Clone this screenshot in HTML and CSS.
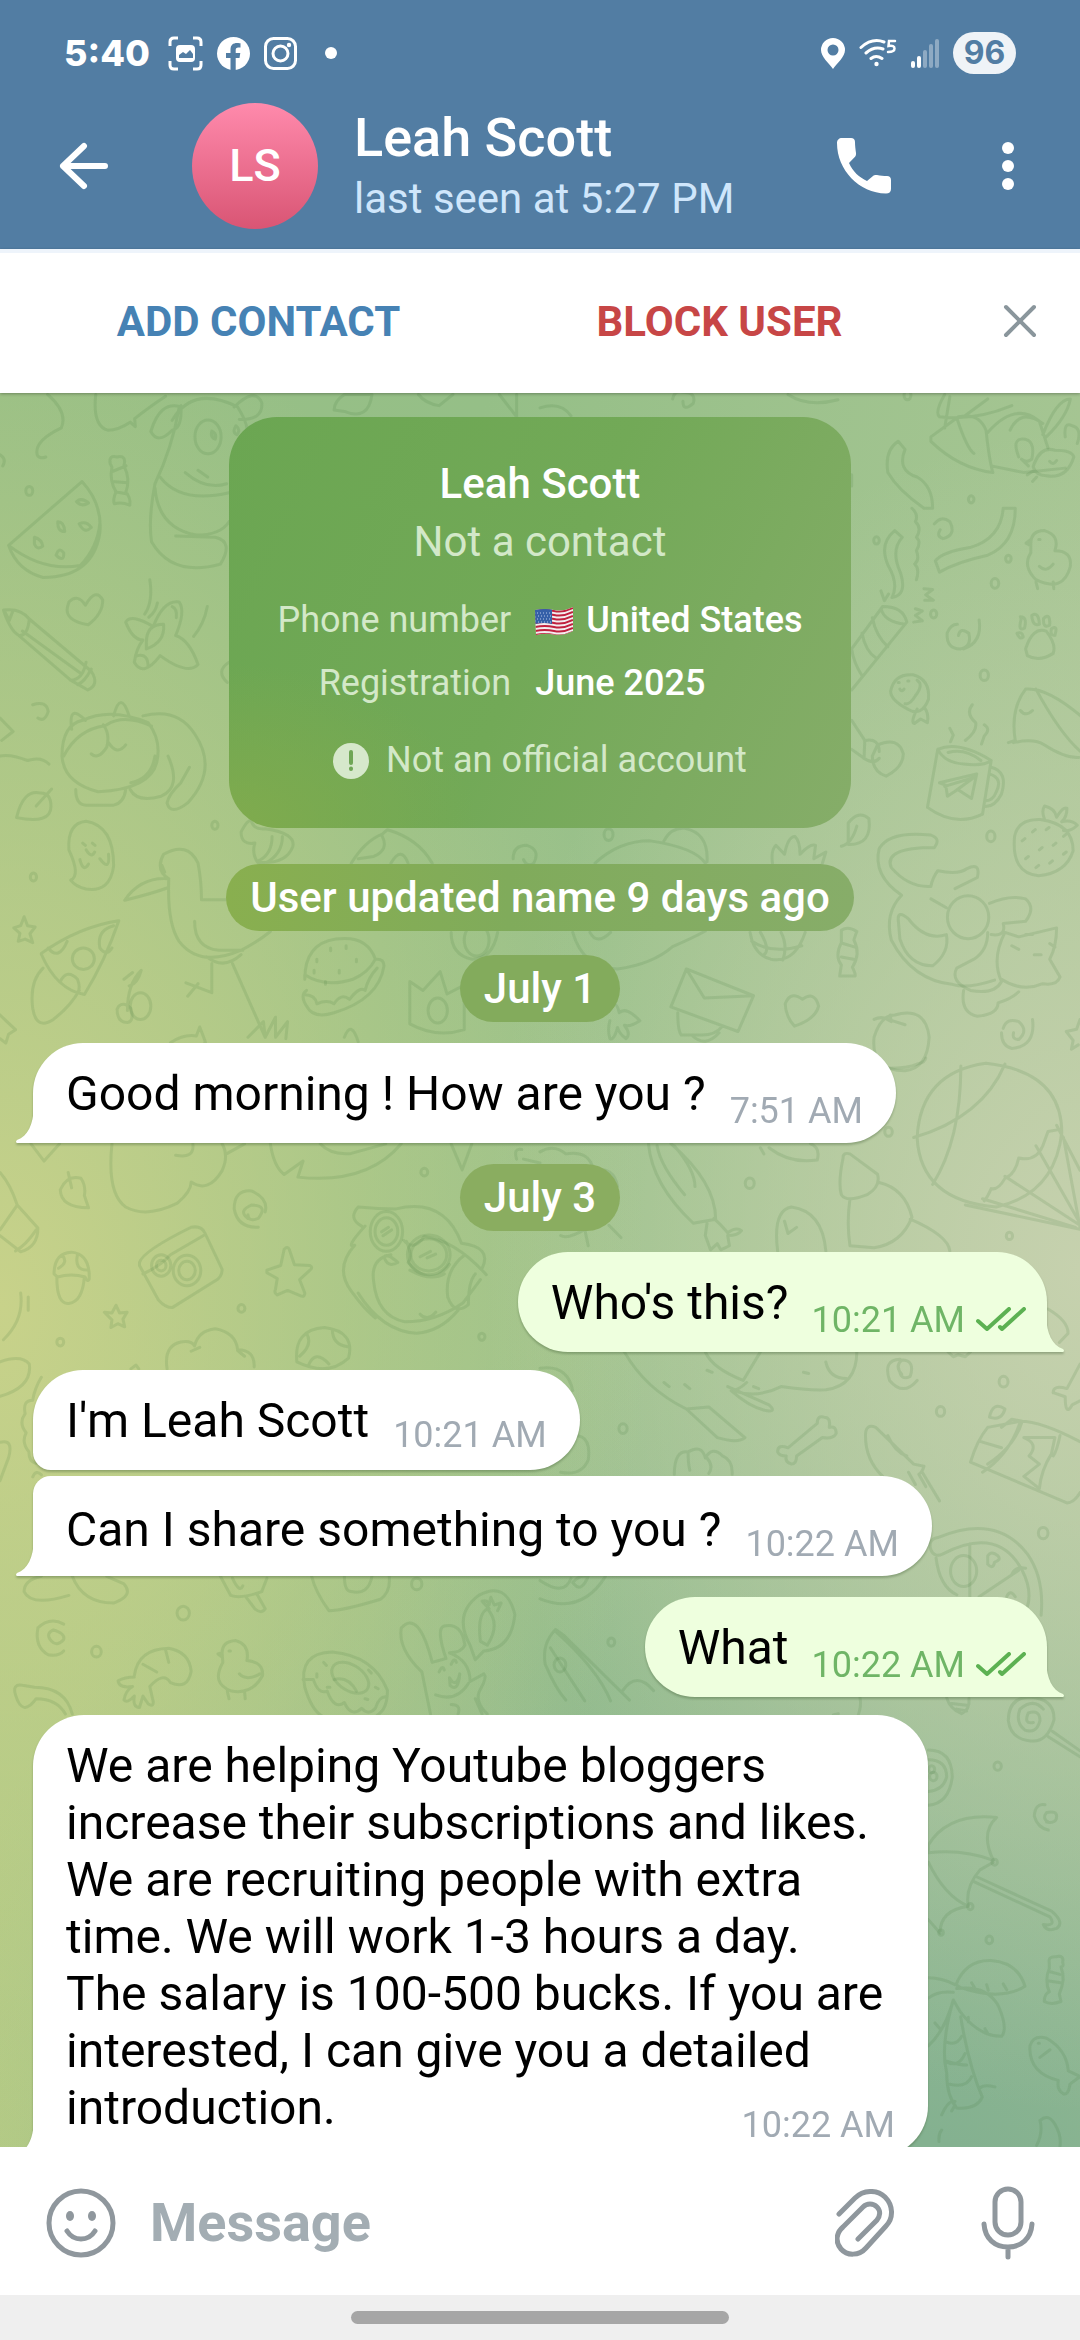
FILE: index.html
```html
<!DOCTYPE html>
<html lang="en">
<head>
<meta charset="utf-8">
<meta name="viewport" content="width=device-width, initial-scale=1">
<title>Leah Scott</title>
<link rel="stylesheet" href="styles.css">
</head>
<body>
<header class="header">
  <div class="status-bar">
    <div class="status-group">
      <span class="clock">5:40</span>
      <svg width="35" height="35" viewBox="0 0 35 35" fill="none" stroke="#fff" stroke-width="3" aria-hidden="true"><path d="M2 10V6q0-4 4-4h4M25 2h4q4 0 4 4v4M33 25v4q0 4-4 4h-4M10 33H6q-4 0-4-4v-4"/><rect x="8" y="9" width="19" height="17" rx="4" fill="#fff" stroke="none"/><path d="M11 22v-3l4-3 3 2 4-4 3 4v4z" fill="#527da3" stroke="none"/></svg>
      <svg width="33" height="33" viewBox="0 0 33 33" aria-hidden="true"><circle cx="16.500" cy="16.500" r="16.500" fill="#fff"/><path d="M13.500 33V21H9v-5h4.500v-3.500c0-4.500 2.700-6.500 6.500-6.500 1.800 0 3.500.3 3.500.3v4.200h-2.200c-2 0-2.600 1.200-2.600 2.500v3h4.600l-.8 5h-3.800v12z" fill="#527da3"/></svg>
      <svg width="33" height="33" viewBox="0 0 33 33" fill="none" stroke="#fff" stroke-width="3" aria-hidden="true"><rect x="1.500" y="1.500" width="30" height="30" rx="8"/><circle cx="16.500" cy="16.500" r="7.500"/><circle cx="25" cy="8" r="2.200" fill="#fff" stroke="none"/></svg>
      <i class="more-dot"></i>
    </div>
    <div class="status-group status-group--right">
      <svg width="24" height="31" viewBox="0 0 24 31" aria-hidden="true"><path fill="#fff" fill-rule="evenodd" d="M12 0a12 12 0 0 1 12 12c0 7-8 13-12 19C8 25 0 19 0 12A12 12 0 0 1 12 0zm0 6.500a5.500 5.500 0 1 0 0 11 5.500 5.500 0 0 0 0-11z"/></svg>
      <svg width="38" height="30" viewBox="0 0 38 30" fill="none" stroke="#fff" stroke-width="3" stroke-linecap="round" aria-hidden="true"><path d="M2 9.500Q13-.5 25 4M7 15q8-7 17-4M12 20.500q5-4 11 0"/><circle cx="17.500" cy="26" r="2.200" fill="#fff" stroke="none"/><path d="M36 3h-6l-.5 5q6-1 6 2.500T29 14" stroke-width="2.500"/></svg>
      <svg width="28" height="31" viewBox="0 0 28 31" fill="#fff" aria-hidden="true"><rect y="23" width="4" height="7" rx="2"/><rect x="6" y="18" width="4" height="12" rx="2"/><g opacity=".35"><rect x="12" y="12" width="4" height="18" rx="2"/><rect x="18" y="6" width="4" height="24" rx="2"/><rect x="24" y="1" width="4" height="29" rx="2"/></g></svg>
      <span class="battery">96</span>
    </div>
  </div>
  <div class="app-bar">
    <button class="icon-button icon-button--back" aria-label="Back"><svg width="50" height="48" viewBox="0 0 50 48" fill="none" stroke="#fff" stroke-width="6" stroke-linecap="round" stroke-linejoin="round"><path d="M46 24H4M25 4 4 24l21 20"/></svg></button>
    <div class="avatar">LS</div>
    <div class="peer">
      <h1 class="peer-name">Leah Scott</h1>
      <p class="peer-status">last seen at 5:27 PM</p>
    </div>
    <button class="icon-button icon-button--call" aria-label="Call"><svg width="54" height="56" viewBox="0 0 54 56" fill="#fff"><path d="M5 0h9c2.500 0 4 1.500 4 4 0 4 .5 7 1 11 .2 1.500-.2 3-1.200 4L12 25c4 9 10 14 18 18l6-5c1-1 2.500-1.200 4-1 3.500.6 6.500 1 10 1 2.500 0 4 1.500 4 4v9c0 3-2 4.500-5 4.500C22 55 0 32 0 5c0-3 2-5 5-5z"/></svg></button>
    <button class="icon-button icon-button--menu" aria-label="More options"><svg width="12" height="50" viewBox="0 0 12 50" fill="#fff"><circle cx="6" cy="7" r="6"/><circle cx="6" cy="25" r="6"/><circle cx="6" cy="43" r="6"/></svg></button>
  </div>
</header>

<div class="report-bar">
  <button class="report-button">ADD CONTACT</button>
  <button class="report-button report-button--danger">BLOCK USER</button>
  <button class="report-close" aria-label="Close"><svg width="34" height="34" viewBox="0 0 34 34" fill="none" stroke="#8a969c" stroke-width="4" stroke-linecap="round"><path d="M3 3l28 28M31 3 3 31"/></svg></button>
</div>

<main class="chat">
  <svg class="wallpaper" viewBox="0 393 1080 1754" preserveAspectRatio="xMidYMin slice" aria-hidden="true">
    <g transform="translate(0 390) scale(.3444 .4464)">
      <path d="M138 10q60 40 40 75-80 30-70 60 5 10 25 5M278 10q-10 70 35 80 30 0 65-18l15 10-2-18q50-30 90-50M0 145q20 10 8 25"/>
      <path d="M320 165q-5-20 20-15 28-5 20 20 20 30 5 60 15 10 12 28-25-8-45-3-5-10 5-27-20-25-12-55zM328 182l38-12M325 205l45 3M335 228l35 5"/>
      <path d="M25 348 238 205q60 50 52 115-20 100-165 100Q50 405 25 348zm0 0q100 60 208 45 50-40 57-95M222 250q15-10 35 3-20 10-35-3zM230 300q20-8 35 8-20 15-35-8zM168 295q18 0 20 22-22 0-20-22zM100 330q22 5 24 20-15 10-24-5zM163 370q8-20 22-5 2 18-15 10z"/>
      <circle cx="85" cy="226" r="10"/><circle cx="604" cy="105" r="38"/><circle cx="624" cy="975" r="9"/><circle cx="97" cy="1091" r="9"/>
      <path d="M525 38q-60-15-87 55 20 30 62-3 30-5 25-55zM500 68q60-80 190-30 40 50 20 60M680 38q60-45 80-10 5 40-65 38M520 40q-20 90-70 170-20 80-10 130 60 80 200 50 40-50-15-60l-115-3M465 195q60 60 200 35M450 220q10 90 120 105 70 0 95-30M538 185q60 40 120 25M575 180l28 15M685 80q15 10 3 20-15-5-3-20zM615 92q15 5 10 18-15-5-10-18z"/>
      <path d="M200 475q25-20 48 7 30-40 50-12 2 30-42 56-70-10-60-40z"/>
      <path d="M10 493q50-5 75 20L265 630q25 30-10 42L205 650 55 550q-25-10-45-57zm75 20q-5 40-30 37M12 494l15 22 10-20M65 540l170 95M250 610q-10 40-45 40M265 625q-20 30-40 35"/>
      <path d="M365 520q15-20 80 10 30-60 75-55 20 20-10 75 40 10 65 65-30 25-110-20-50 50-75 15 5-30 25-50-30 0-50-40zM425 565q0-40 50-40 5 40-50 55zM400 595q30-5 30 25M435 425q10 50-15 77M457 477q-5 20-25 32M602 485q-10 40-40 67M500 485q15 5 12 25"/>
      <path d="M180 820q0-70 60-80 80-30 190 5 40 40 25 90-20 60-170 65-100-20-105-80zM208 760q-10-60 40-20M330 730q20-60 45 0M185 820q40-60 120-68M300 750q20 20 10 50-25 30-45 15M310 750q50-25 130 3M315 790q25 30 50 5M415 730q100-20 150 40 70 80-20 155-50 30-60 0 5-20 40-45l25-35M380 880q60-10 70-60M378 895q20 30 90 15 60-20 20-90M220 895q0 35 30 35h80q30-5 35-35M95 705q40-10 45 15-10 25-30 15M0 735l38 30L5 785M0 820q30-5 80 10 40-10 62 8"/>
      <path d="M48 958q20-65 70-55 30 0 30 30 0 40-100 25zM105 932l45-38"/>
      <path d="M200 1030q-5-60 50-64 80 10 80 100-10 60-80 52-30-5-45-20 30-10-5-68zM240 1015l8 5M268 1015l8 5M250 1030q15 20 25 5M232 1052q10 30 25 10M290 1050q30 30 25-10"/>
      <path d="M490 1095q-40-20-15-55 70-30 100 20 10 40 10 82h70M490 1095q-80-5-128 48 80-15 125-28M490 1095q-5 100 30 140 60 60 180 20 50-20 85-42M565 1190q0 60 70 65h70M600 1270q50 30 100-5M615 1285v65l-75-22M575 1330l-30 28M675 1285l95 165M720 1450l45-35 5 35 30-45v45l35-35-5 38M470 1065l8 15"/>
      <path d="M700 990q20-30 30-25 5 20 40 18 90 10 80 40-20 40-100 35M700 990q0 30 40 25M740 1015q-10 25 10 45M790 1000q0 40-40 55M820 1000q0 40-50 60"/>
      <path d="M40 1205l20-5 10-20 10 20 22 3-15 15 8 20-22-8-20 5 5-18z"/>
      <path d="M120 1262q110-60 225-73-40 90-100 165-80-10-125-90zM125 1295q-40 30-30 90 10 50 60 25 50-30 75-65M140 1250q30 30 55-15M330 1200q-50 10-40 50 20 20 35 0M175 1325q20-30 50-5 10 20 0 30"/><ellipse cx="242" cy="1274" rx="32" ry="24"/>
      <path d="M370 1390q0-60 40-90-10 30-35 35M345 1380q15-10 35 5 10 30-10 32-30 0-30-30zM360 1320l25-15"/><circle cx="408" cy="1380" r="30"/>
      <path d="M885 1320q0-80 90-90 90-10 115 45-20 30-65 45-80 20-140-10zM890 1345q-20 10 0 35 20 30 80 15 130-30 145-105 0-15-20-15M885 1355q30 0 35 20 30-10 50 0 20-25 45-10 30-30 45-20 10-30 35-50"/><path d="M912 1300v6M920 1275v6M960 1250v6M1005 1245v6M1035 1275v6M945 1325v6M985 1300v6" />
      <path d="M1190 1420v-95l38 20 50-42 20 50 50-20v100q-80 20-158-13z"/><circle cx="1271" cy="1390" r="28"/>
      <path d="M970 45q0-20 30-35h80q-10 60-80 38zM1215 10q20 20 60 25l40-25M1450 10l50 50M1500 10v55M1020 1060q40-50 90-65l15-10q90 20 130 75M1110 1000q20 30-25 45l-45 5M1135 1060q30-40 50 0M1490 1050q0-30 40-30 40 10 20 40-20 10-30-8M1310 1215q0 50 60 60 60 0 75-60"/><circle cx="1384" cy="1232" r="36"/>
      <path d="M495 1462q40-20 75-15l10-20 10 20q10 20 5 15M1000 1450q20-40 40 10M0 1400l20 15 25 18-20 10-8 20-17-10"/>
      <path d="M665 610q-40 20-5 45"/>
    </g>
    <g transform="translate(540 390) scale(.3444 .4464)">
      <path d="M0 40q60-15 90 18M385 20q5-20 30-15 40 0 30 25-30 20-30-5M720 10q60 30 145 12M905 190v25"/>
      <path d="M1175 10q-30 40-15 50 100 10 210-25M1190 15l-15 70M1135 105l80-45q60-10 80 30 10 70 20 95-100-10-180-70zM1210 62q30 70 50 80M1300 95q80-70 150-25l25 60M1365 90q30-50 95-15M1310 170l95 15 120-10M1460 100q40-80 80-80-10 40-70 85M1230 60l70-40"/>
      <path d="M1435 165q20-40 60-30 50 0 55 15-20 50-80 42-30 0-38-20zM1390 150q-20-40 10-40 40 0 28 45-15 10-30 0l20 15M1525 105q-5-35 20-25 30 5 15 40M1480 160q10 10 20-2M1415 190l20-10M1430 205l12-10"/>
      <path d="M1040 115q-40 20-30 70 30 40 105 80h25q0-50-45-70-60-15-35-62zM1345 265h35q0 80-80 105-90 15-140 38l-12-25q20-20 100-30 90-20 97-88zM1030 315l22 15q-35 30-5 80 20 50-25 55 20-30-10-70-30-50 18-80zM1080 265q20 15 10 30 20 15 3 35 15 10 0 30 10 20-5 30 15 10 5 35M1145 300q20-20 45-5 20 30-20 38-20-5-8-20M1115 445l25 2-20 12 22 12h-25M1090 490l20 5-20 10 20 12-25 3M990 450l10 22 12-15"/>
      <circle cx="1252" cy="245" r="8"/><circle cx="977" cy="337" r="8"/><circle cx="1360" cy="378" r="8"/><circle cx="1321" cy="433" r="11"/><circle cx="1143" cy="502" r="9"/><circle cx="1290" cy="639" r="12"/><circle cx="1309" cy="1000" r="12"/><circle cx="199" cy="996" r="13"/><circle cx="1067" cy="12" r="10"/>
      <path d="M1425 345q0-30 40-30 45 10 30 45 50 0 45 35-20 60-100 30-40-30-15-60zM1425 335l-14 8 14 6M1490 390q-20 20-40 5M1440 430l5 15M1490 430l2 15M1448 335h4"/>
      <path d="M905 580l90-95q60 0 70 35L905 672M990 490q10 30 70 35M965 510q10 40 45 65M935 545q10 40 40 55M905 580q5 30 30 60M1215 550q5-20 30-5 10 30-25 35-40 0-38-35 10-20 30-20M1275 515q10 50-45 65"/>
      <path d="M1410 580q20-50 60-40 30 30 20 50-40 20-75 5zM1395 508q20 0 12 25-20 10-10-20zM1428 505q20-10 22 20-20 5-22-20zM1462 512q20-15 18 15-20 8-18-15zM1485 535q20-10 10 15-15 0-10-15zM1385 545q15-5 18 8-10 8-18-8z"/>
      <path d="M1018 675q10-40 65-37 50 10 45 55-20 40-60 22-50-20-50-40zM1095 715q-20 30-8 32l18-10 20 8q5-20-10-35M1095 650q20 10-5 35-15 20-30 18M1040 655h3M1068 652h3M1045 670q5 8 12 0"/>
      <path d="M905 740l38 45-2 40-36-20M945 785q40-5 40 25M940 825q30 15 45 0M980 795q60-20 75 20 0 30-50 50-40-10-40-45z"/>
      <path d="M1360 790l20-5q-15-70 30-115 60-5 160 60M1375 790q60-10 90 5 60 30 100 28M1395 718q15 15 35 0M1440 670q70 100 130 140M1255 705q-20 20 10 40 5 20-30 40M1190 758l10 15-8 15M1290 750q20 10 0 25l-8 18"/>
      <path d="M1155 805q60-20 155 25l-25 120q-80 30-160-15zM1155 805q20 30 75 33 60 5 80-8M1185 812q50-10 95 18M1310 845q50 10 30 60-20 30-50 28M1305 860q40 10 20 40-10 20-30 20M1160 880l108-20-15 55-40-20-30 15-5-25zM1175 888l85-20-50 28"/>
      <path d="M1378 1000q10-40 75-38 95 10 95 70-20 50-100 56-80-5-70-88zM1465 962q-10-20 0-30 30 5 35 25 20-25 30-20 0 20-15 30 30-5 45 8-20 15-40 12M1400 1010l8-5M1430 990l8-5M1470 985l8-5M1410 1050l8-5M1450 1030l8-5M1490 1020l8-5M1520 1000l8-5M1440 1070l8-5M1480 1060l8-5M1520 1040l8-5"/>
      <path d="M895 970q30-30 60-10 10 60-60 58zM875 1022q30-5 45-45M1145 1025q20-20-10-28-120-10-150 30-20 60 65 105-50 40-30 100 60 90 180 100 40 10 120-10M1145 1025q-150 0-125 45 50 45 115 42 5-20 20-35 60 10 85-5 40-15 30 20l-65 25M1040 1185q0-20 30 0 50 50 110 35 10 40-40 70-70 0-95-60zM1135 1140l45 20"/>
      <ellipse cx="1243" cy="1181" rx="60" ry="48"/>
      <path d="M1305 1150q60-20 105-10 30 20 0 50l-65 5q10 30-35 25M1300 1215q0 40-40 60l-50 20q-20 30 40 50 70 10 90-20-30-50 10-110l40 10 110-20q0 40-20 70l30 40q-10 20-50 15-60 20-120-10M1230 1345q-10 50 40 58 60-5 60-30 40-10 60-25M1410 1220h20M1435 1265h20M1480 1240l15 8M1370 1245l20 8"/>
      <path d="M160 1060q70-50 160-50 130 15 160 50M360 1010q20-30 60-28 70 10 65 75M95 1215q30 80 130 82 100-10 160-50 60-20 95-35M145 1215q20 30 60 0M675 1060q-5-30 10-40l25 20q10-40 30-40 15 10 15 40 30-25 45-20l-5 30 35-15-10 25M610 1215q10 50 60 60 70 10 100-60M640 1215q30 40 10 50M700 1215q20 30 5 62M615 1235q60 30 145 10"/>
      <path d="M875 1210q20-10 45 3-10 20-8 20 20 30-5 60 10 15 8 20h-45l5-25q-20-20 0-50zM880 1240l35 8M875 1270l35 5"/>
      <path d="M425 1297l195 60-45 80-195-55zm0 0l52 65 143-5M400 1395q0 40 10 50h60q40 0 60-20M440 1445q40 30 80-5M712 1375q15-30 50-10 35-20 47 15-10 30-70 45-25-20-27-50z"/>
      <path d="M970 1450q20-50 60-50 90-20 100 50-5 70-70 75-100 0-90-75zM970 1410q25-10 50 5l-3-15M1020 1412l40 10M1345 1430q10-25 45-15 30 20 0 40-20 0-15-15M1430 1410q10 60-60 65-30-5-30-35M1568 1410l-10 22-30 5 20 20-5 20 20-10"/>
      <path d="M200 1390q20-30 30 5 20-15 60 18-30 15-45 10 20 20 5 30-20-10-25-25-10 30-22 25-8-20 0-40"/>
    </g>
    <g transform="translate(0 1140) scale(.3444 .3827)">
      <path d="M90 10l38 45 45-45M325 10q-15 130 40 165 60 30 150-10 40-30 40-55 50 30 90-30 20-40 0-70M660 35l50-25M560 10q5 40-50 30M785 10q10 60 40 80l55-35-15 42q200 20 300-87M930 10q30 30 90 25l100-25M1310 10l32 68 28-68M1500 50q-10-30 15-25M1520 50l48 10"/>
      <path d="M175 130q20-40 60-30 15 20 10 45l12 32q-80 0-82-47zM198 85l10 40M0 85q30 30 50 85l60 60q0 50-50 62L0 250M50 170L0 235M105 235q-30 40-60 55"/>
      <path d="M720 205q-30-20 10-35 50 0 20 35-30 10-30-10M680 180q0-50 50-47 50 20 40 55M680 180q10 50 70 48"/>
      <path d="M157 350q0-55 50-57 55 5 52 70-5 10-12-5-40-10-80 0zM165 360q0 70 35 67 40-5 45-70M180 300q20 20-10 35M225 300q-10 40 30 40"/>
      <path d="M405 320q10-30 150-92 30-5 40 15l50 95q0 20-20 30l-125 70q-20 0-40-20l-55-90zM415 350q50-20 80-50l95-50"/><circle cx="468" cy="328" r="28"/><circle cx="468" cy="328" r="14"/><circle cx="543" cy="341" r="40"/><circle cx="543" cy="341" r="24"/>
      <path d="M775 340l40-12 10-42q10-10 15 0l15 40 45 2q10 5 0 12l-30 25 15 35q0 10-10 8l-40-15-30 12q-10-5-5-15l5-28-30-15zM303 450l22 2 12-20 10 20 22-2-12 18 5 20-20-8-20 10 3-20z"/>
      <circle cx="1232" cy="84" r="10"/><circle cx="701" cy="440" r="10"/><circle cx="175" cy="528" r="10"/><circle cx="1399" cy="514" r="9"/><circle cx="1210" cy="1160" r="15"/><circle cx="532" cy="1236" r="18"/><circle cx="280" cy="1337" r="14"/>
      <path d="M60 400q10 70-50 122M82 410v35M0 580q60-20 85 5 10 60-85 85M485 598q-10-60 40-70 30-5 40 10 10-40 60-45 60 10 65 55 50 0 48 45M555 552l25-10M690 550l20 15M380 598l15-10 8 10M862 580q-10-85 80-90 90 10 70 80-60 50-150 10zM890 505q20 30-20 60M965 495q0 40 45 45M895 590q20-45 60-5"/>
      <path d="M1050 225q-40-20-10-50 60 5 110 5 140-30 190 90 90 10 60 65M1060 225q-60 60-30 50-60 60-10 120 40 50 70 70M1085 370q-10-60 50-70M1085 370q10 90 90 105 90 0 170-50l50-60M1040 400q70 100 170 105 70-5 120-60M1350 300q-60 40-50 110 20 50 60 20 0-60 20-80M1115 305q10-10 40 15-30 15-40-15zM1220 455q20 20 45-5M1172 262q30 30 60-10 90 10 180 100M1180 265q20 40 5 55 70 70 120 5M1190 340q60 30 100 10"/><ellipse cx="1122" cy="239" rx="47" ry="52"/><ellipse cx="1122" cy="239" rx="33" ry="36"/><ellipse cx="1245" cy="300" rx="62" ry="52"/><ellipse cx="1245" cy="300" rx="52" ry="42"/><path d="M1108 240l20-12M1112 250l25-15M1220 305l30-14M1240 308l25-10"/>
      <path d="M120 620q-20 30-25 60-30 0-22 35-20 25 3 50-15 25 8 50 0 25 20 30M0 790q40-10 25 40L0 890M95 880q10-20 25-5M70 1180q0-30 50-40M70 1180q20 40 130 10M210 1140q30 70 120 70 60-20 30-50l-50-20M640 1140l30 50q30 10 90-10l15-35M715 1195l25 30q20 15 30 0l-25-40M675 1145q20 40 30 20M905 1140q10 40 50 90 40 0 150-30 30-20 25-60M1000 1140q0 40 20 40 50 10 60-40"/>
      <path d="M150 1310q-20-20 5-30 35 10 30 25-20 20-35 5M185 1265q-40-20-75 10-10 50 30 70 30 5 45-10M390 1400q10-70 100-72 60 10 65 60-10 50-60 30-20-30-60 10l10 40q0 15-15 5l-15-20-10 30q-20 0-15-30-20 20-30 10 5-25 25-35-40 5-42-15 20-10 47-10M480 1330l10 35M415 1370l40 20"/>
      <path d="M645 1340q0-30 40-32 40 10 32 52 50 5 45 40-30 50-90 40-60-20-25-75zM645 1340l-12 3 12 8M660 1440l5 20M710 1440l2 20M665 1335h4M755 1395q-40 20-60 0"/>
      <path d="M885 1430q-20-90 80-92 120 10 160 100 0 50-30 65M880 1410l30 0q15 40 40 30 20 50 50 30 20 40 50 15 20 20 40 0 10-30 30-30M885 1430q20 60 50 75"/><ellipse cx="1017" cy="1405" rx="58" ry="34" transform="rotate(28 1017 1405)"/><path d="M970 1410q40-10 65 30M940 1365l8 8M920 1395v8M1070 1385l8 8M1090 1430l8 4M950 1430h8M1060 1460l8 2"/>
      <path d="M1225 1390q-70-60-60-115 50-50 90 90 20-5 40-10-30-80-5-85 50-10 60 50-10 20-45 20 60 20 60 75l40-20q10 10-10 40-20 30 20 65M1225 1390l25 110M1265 1450q60 20 95-30M1275 1390q10-20 15-5M1310 1370q10-20 15-5M1305 1405q20 30 30-10-5 50-28 30zM1380 1460l20 40M1310 1475q30 0 20 25"/>
      <path d="M1380 1358l-15-38q-50-80 25-130 80-40 105 50-10 90-90 95zM1395 1310q-10-70 20-85 40 40 0 95zM1420 1225l-20-20q15-5 20 10l5-20 10 20 20-5-10 20"/>
      <path d="M45 1450q-10-30 20-25l35 5q90 0 110 70M45 1450q20 60 60 10 60 0 85 40"/>
    </g>
    <g transform="translate(540 1060) scale(.3444 .4082)">
      <path d="M1095 190q10-160 200-182 220 20 220 170-20 150-190 182-220-15-230-170zM1085 190q200-50 265-180M1222 15q0 180-82 290M1460 210l15-35 35-5M1460 210q-20 40-70 30-10 40-40 50-20 30-40 25-10 20-20 30M1500 160l68 110M1440 210l128 190M1350 285l218 120M1285 340l270 70M1520 190l48 220M1235 355l333 60"/>
      <circle cx="1012" cy="176" r="11"/><circle cx="609" cy="302" r="13"/><circle cx="1363" cy="431" r="9"/><circle cx="1346" cy="788" r="13"/><circle cx="1163" cy="861" r="12"/><circle cx="241" cy="903" r="12"/><circle cx="1461" cy="1159" r="14"/><circle cx="207" cy="1426" r="10"/>
      <path d="M1010 20q60 0 85-10 25-5 25-15M0 225q40-20 75 5 70-10 80 40 60-10 70 40M60 430q20 10 70-15l10 40M200 405l35 30M315 205q10 100 130 195l65-10q0-90-130-185M340 210q10 50 80 120M390 210q60 60 60 100M485 400l-5 30 15 35 20-15 10 15 25-10-5-25q30 0 40-12-15-10-40 5-20-20-40-35M665 215q60 40 140 30 10-30-20-40M640 215l10 15"/>
      <path d="M690 468q-15-100 40-108 90 10 100 108M710 395l10 30 25-15M880 240q0-15 20-10l80 50q10 30-30 50-60 20-75 0-10-30 5-90zM900 340q-10 60 0 115l70 5q80-10 110-75-20-70-95-85M1075 390q110 40 115 78M245 715q60 90 180 140l65-5 105 75q-20 15-80 0l-90-70M480 715q20 40 110 70l50-70M545 800l120 45q20 15 0 15-50-5-110-50 20 0 45-20M560 810q70 20 140-10 80 10 130 8 90-10 90-95M830 740q10 40 60 40M360 790l15 10M420 795l15 10M485 760l15 5M620 800l15 5M765 765l15 3"/>
      <path d="M690 960q0-20 30-10l85-60q0-20 20-15 20 0 15 25 20-5 20 15-10 15-40 10l-75 45q0 20-15 20-20-5-15-20-20 0-25-10z"/>
      <path d="M1050 770q-20-20 0-35 40 0 25 40-25 10-30-10M1095 785q-40 40-80 0-20-50 30-52M1185 715l15 12 15-5 20 5 15-12M1475 610q60 30 58 60l-25 22"/>
      <path d="M945 920q0-30 30-20l110 90 30 5q-5 15-15 20l20 30M945 920q0 60 50 100M1010 920q20 40 55 50M1070 1010l20 30M1110 1010l50 70M390 1015q0-60 40-55 40-20 50 15 20-30 50-5 30 10 28 45M430 960q0 30 5 45M485 975q20 20 5 38M0 755q80-10 95 55M100 920q50 0 40 60-20 40-80 30"/>
      <path d="M1300 900l95-15q60 0 173 50M1300 900q-30 30-50 85l280 100q20 0 38-25M1395 885q-30 80-110 125M1340 900l30-20 30 5q-20 60-100 105M1280 935l60 15M1415 925h80l-10 40q-30 40-35 85l-45-30 45-30-30-20q30-30-15-45zM1510 920q-10 40-20 50M1305 875q10-40 45-20-10 30-45 20zM1490 815q0-20 40-10l38-60M1490 815l35 10q0 50 20 20l23-10"/>
      <path d="M1135 1200q-10-25 20-30 170-60 260 40 50 60 40 150M1135 1200q10 20 35 10 160-70 230 40 30 50 15 90M1150 1220q10 70 60 90M1248 1185v130M1275 1315l115-65M1300 1215q10-15 30 0 10 10-10 15-5 20-20 5zM1370 1260q10-20 40-15M1355 1315q10-20 25 0"/><circle cx="1230" cy="1252" r="38"/>
      <path d="M0 1275q70 40 90-5M0 1320q120 40 190-55M95 1280q20-20 45-15-20 40-40 20zM15 1480q-10-50 30-85l25 15 190 158M45 1400q120 90 160 170M30 1440l100 130M15 1480q30 60 60 88M240 1545q40-50 90 0"/><circle cx="58" cy="1482" r="17"/>
    </g>
    <g transform="translate(800 1690) scale(.3333 .3827)">
      <path d="M180 20q5 20-5 45M440 20q10 30 45 42 25-10 22-40M455 35l45 5M470 50l30 5M100 65l15-3"/>
      <circle cx="593" cy="199" r="11"/><circle cx="568" cy="653" r="10"/>
      <path d="M625 80q0-60 65-62 75 5 72 60-20 60-70 55-60-5-67-53zM700 85q-30 5-15-25 35-10 35 20-10 35-45 25-30-20-15-55 40-30 70 0M757 108l90 55M745 122l100 55M385 157q70 0 72 70-10 70-72 74M385 182q55 0 55 45-10 35-55 38"/><circle cx="400" cy="226" r="11"/><circle cx="395" cy="207" r="9"/>
      <path d="M745 345q-20-10-5-25 30-5 30 10 0 20-30 15M735 300q-30-5-32 30 10 30 42 36"/>
      <path d="M385 405q60-85 205-72-50 40-10 112-90-30-195-20zM385 450q50 90 120 115-10-50 35-95l40-20M385 600l35 35q0-60 85-70M530 488l225 90q40 30 15 45-30 10-40-10 40 5 20-20L520 500"/><circle cx="584" cy="450" r="8"/><circle cx="511" cy="566" r="8"/><circle cx="423" cy="634" r="7"/>
      <path d="M468 770q30-65 105-63 80 5 102 67-70 40-195 3zM385 752q40 0 80 18M385 805q30-20 75-15M470 780q90-10 125 45 30 60 10 80-70 0-125-65l-20-30M385 930q50-40 75-120-40 120-20 190 0 60 30 92 60 5 77-28-40-80-65-210M440 920q30 10 45-15M435 970q40 20 60-20M450 1030q50 10 65-20M500 980q-20 0-60-10M425 1110q20-40 40-35M455 1100l10-15M540 1040q10-10 45-3M425 1150q-10 10-8 30M515 765l8 12M560 770l5 15M610 768l10 15M505 855v12M555 885l8 12M405 870l15 15"/>
      <path d="M748 715q-5-20 20-18 25-5 20 15 5 10-5 12 15 30-5 70l5 20q-30 10-50 0 0-20 15-25-15-30 0-62zM745 735l35 8M742 760l40 5"/>
      <path d="M690 930q10-30 50-20 60 30 65 85l35 15-30 20q-5 30-20 25-20-10-15-35-90-20-85-90zM720 960l30-20M715 923h3M720 1125q25-20 45 10 20 30 15 58M720 1125q10 30-10 65"/>
    </g>
  </svg>

  <section class="info-card">
    <h2 class="info-name">Leah Scott</h2>
    <p class="info-relation">Not a contact</p>
    <dl class="info-list">
      <dt>Phone number</dt>
      <dd><svg class="flag" width="38" height="28" viewBox="0 0 38 28" role="img" aria-label="US flag"><defs><clipPath id="flag-shape"><path d="M0 3q10-2 19 0t19-3v24q-10 5-19 3.500T1 28z"/></clipPath></defs><g clip-path="url(#flag-shape)"><path fill="#f3eef0" d="M0 0h38v28H0z"/><path d="M0 4q10-2 19 0t19-3M0 8q10-2 19 0t19-3M0 12q10-2 19 0t19-3M0 16q10-2 19 0t19-3M0 20q10-2 19 0t19-3M0 24q10-2 19 0t19-3M0 28q10-2 19 0t19-3" fill="none" stroke="#c0213f" stroke-width="2"/><path fill="#3560a8" d="M0 0h17v17q-8-2-17 0z"/><path d="M2 6h14M3 9h14M2 12h14M3 15h14" stroke="#b9cbe8" stroke-width="1" stroke-dasharray="1 2"/></g></svg>United States</dd>
      <dt>Registration</dt>
      <dd>June 2025</dd>
    </dl>
    <p class="info-note"><svg width="36" height="36" viewBox="0 0 36 36" aria-hidden="true"><circle cx="18" cy="18" r="18" fill="#d6e8cb"/><path d="M18 9v11M18 25.500v.5" stroke="#6fa655" stroke-width="4" stroke-linecap="round"/></svg>Not an official account</p>
  </section>

  <p class="chip chip--action">User updated name 9 days ago</p>
  <p class="chip">July 1</p>
  <article class="bubble bubble--in bubble--tail-in"><p class="bubble-text">Good morning ! How are you ?</p><time class="bubble-time">7:51 AM</time></article>
  <p class="chip chip--later">July 3</p>
  <article class="bubble bubble--out"><p class="bubble-text">Who's this?</p><time class="bubble-time">10:21 AM</time><svg class="checks" width="50" height="24" viewBox="0 0 50 24" aria-label="Read"><path d="M2 14l9 8L33 2M24 20l2 2L48 2"/></svg></article>
  <article class="bubble bubble--in bubble--first"><p class="bubble-text">I'm Leah Scott</p><time class="bubble-time">10:21 AM</time></article>
  <article class="bubble bubble--in bubble--last bubble--tail-in"><p class="bubble-text">Can I share something to you ?</p><time class="bubble-time">10:22 AM</time></article>
  <article class="bubble bubble--out"><p class="bubble-text">What</p><time class="bubble-time">10:22 AM</time><svg class="checks" width="50" height="24" viewBox="0 0 50 24" aria-label="Read"><path d="M2 14l9 8L33 2M24 20l2 2L48 2"/></svg></article>
  <article class="bubble bubble--in bubble--long bubble--tail-in"><p class="bubble-text">We are helping Youtube bloggers increase their subscriptions and likes. We are recruiting people with extra time. We will work 1-3 hours a day. The salary is 100-500 bucks. If you are interested, I can give you a detailed introduction.</p><time class="bubble-time">10:22 AM</time></article>
</main>

<footer>
  <form class="composer">
    <button type="button" class="tool" aria-label="Emoji"><svg width="70" height="70" viewBox="0 0 70 70" fill="none" stroke="#8f979d" stroke-width="5" stroke-linecap="round"><circle cx="35" cy="35" r="32"/><path d="M21 43q5 8 14 8t14-8"/><ellipse cx="24" cy="28" rx="4" ry="5" fill="#8f979d" stroke="none"/><ellipse cx="46" cy="28" rx="4" ry="5" fill="#8f979d" stroke="none"/></svg></button>
    <input class="message-input" type="text" aria-label="Message" placeholder="Message">
    <button type="button" class="tool" aria-label="Attach"><svg width="60" height="68" viewBox="0 0 60 68" fill="none" stroke="#8f979d" stroke-width="5" stroke-linecap="round"><path d="M4 25 20 9C28 1 42 0 50 8s9 21 1 29L31 59C24 67 12 67 6 60s-5-16 2-22L28 18c4-4 10-4 14 0s3 9 0 13L23 50"/></svg></button>
    <button type="button" class="tool tool--mic" aria-label="Record voice message"><svg width="54" height="74" viewBox="0 0 54 74" fill="none" stroke="#8f979d" stroke-width="5" stroke-linecap="round"><rect x="14" y="3" width="26" height="46" rx="13"/><path d="M3 38c1 15 11 23 24 23s23-8 24-23M27 61v10"/></svg></button>
  </form>
  <div class="nav-bar"><i class="nav-handle"></i></div>
</footer>
</body>
</html>
```
FILE: styles.css
```css
* {
  box-sizing: border-box;
}

body {
  display: flex;
  flex-direction: column;
  height: 100vh;
  margin: 0;
  font-family: Roboto, "Liberation Sans", sans-serif;
  background: #fff;
}

h1, h2, p, dl, dd {
  margin: 0;
}

button {
  padding: 0;
  border: 0;
  background: none;
  font: inherit;
}

svg {
  display: block;
}

/* Header */
.header {
  flex: none;
  background: #527da3;
  color: #fff;
}

.status-bar {
  display: flex;
  justify-content: space-between;
  align-items: center;
  height: 83px;
  padding: 23px 64px 0;
}

.status-group {
  display: flex;
  align-items: center;
  gap: 14px;
}

.clock {
  margin-right: 4px;
  font: 800 36px/48px Inter, sans-serif;
}

.more-dot {
  width: 12px;
  height: 12px;
  margin-left: 14px;
  border-radius: 50%;
  background: #fff;
}

.battery {
  width: 63px;
  border-radius: 21px;
  background: #eff3f7;
  color: #527da3;
  font: 700 32px/42px Inter, sans-serif;
  text-align: center;
}

.app-bar {
  display: flex;
  align-items: center;
  height: 166px;
}

.icon-button {
  display: flex;
  align-items: center;
  justify-content: center;
  height: 144px;
}

.icon-button--back {
  width: 168px;
}

.icon-button--call {
  width: 144px;
}

.icon-button--menu {
  width: 144px;
}

.avatar {
  width: 126px;
  margin: 0 36px 0 24px;
  border-radius: 50%;
  background: linear-gradient(#ff8aac, #d95574);
  font-size: 45px;
  font-weight: 500;
  line-height: 126px;
  text-align: center;
}

.peer {
  flex: 1;
}

.peer-name {
  font-size: 54px;
  font-weight: 500;
  line-height: 64px;
}

.peer-status {
  color: #cfe6fb;
  font-size: 42px;
  line-height: 57px;
}

/* Add / block actions */
.report-bar {
  position: relative;
  z-index: 1;
  display: flex;
  flex: none;
  height: 144px;
  padding-left: 28px;
  background: #fff;
  box-shadow: inset 0 4px #eef4fb, 0 1px 3px rgba(0, 0, 0, .3);
}

.report-button {
  flex: 1;
  color: #4682b4;
  font-size: 42px;
  font-weight: 700;
}

.report-button--danger {
  color: #c74646;
}

.report-close {
  display: flex;
  align-items: center;
  justify-content: center;
  width: 120px;
  margin-left: 10px;
}

/* Conversation */
.chat {
  position: relative;
  display: flex;
  flex: 1;
  flex-direction: column;
  align-items: center;
  min-height: 0;
  padding: 24px 33px 0;
  overflow: hidden;
  background:
    radial-gradient(ellipse 60% 58% at 0% 52%, #c8d28a, transparent),
    radial-gradient(ellipse 55% 48% at 100% 50%, #c6d1ae, transparent),
    radial-gradient(ellipse 95% 55% at 85% 105%, #84b190 10%, transparent),
    radial-gradient(ellipse 60% 50% at 0% 100%, #b4cb83, transparent),
    linear-gradient(100deg, #98bf85, #95bf87 35%, #adc898);
}

.wallpaper {
  position: absolute;
  inset: 0;
  width: 100%;
  height: 100%;
  fill: none;
  stroke: rgba(70, 120, 60, .15);
  stroke-width: 3px;
  stroke-linecap: round;
  stroke-linejoin: round;
}

.wallpaper * {
  vector-effect: non-scaling-stroke;
}

.info-card,
.chip,
.bubble {
  position: relative;
  flex: none;
}

.info-card {
  margin-bottom: 36px;
  padding: 38px 48px 36px;
  border-radius: 48px;
  background:
    radial-gradient(ellipse 40% 40% at 0 100%, #80ab4d, transparent),
    linear-gradient(115deg, #6ba652, #72a957 50%, #86ad69);
  color: #d3e8c8;
  font-size: 36px;
  line-height: 63px;
  text-align: center;
}

.info-name {
  color: #fff;
  font-size: 42px;
  font-weight: 500;
  line-height: 58px;
}

.info-relation {
  font-size: 42px;
  line-height: 58px;
}

.info-list {
  display: grid;
  grid-template-columns: auto auto;
  column-gap: 24px;
  margin: 18px 0 14px;
}

.info-list dt {
  text-align: right;
}

.info-list dd {
  display: flex;
  align-items: center;
  gap: 13px;
  color: #fff;
  font-weight: 500;
}

.info-note {
  display: flex;
  align-items: center;
  justify-content: center;
  gap: 17px;
}

.chip {
  margin-bottom: 21px;
  padding: 0 24px;
  border-radius: 34px;
  background: #83ab5c;
  color: #fff;
  font-size: 42px;
  font-weight: 500;
  line-height: 67px;
}

.chip--action {
  margin-bottom: 24px;
  background: linear-gradient(90deg, #89af4f, #80ab5b 45%, #87ad69);
}

.chip--later {
  background: #8aad60;
}

.bubble {
  display: flex;
  align-items: flex-end;
  gap: 24px;
  margin-bottom: 21px;
  padding: 22px 33px 14px;
  border-radius: 51px;
  background: #fff;
  color: #000;
  filter: drop-shadow(0 2px 1px rgba(60, 90, 50, .35));
}

.bubble-text {
  margin-bottom: 7px;
  font-size: 48px;
  line-height: 57px;
}

.bubble-time {
  flex: none;
  color: #a1aab3;
  font-size: 36px;
  line-height: 36px;
}

.bubble--in {
  align-self: flex-start;
  max-width: 92%;
}

.bubble--out {
  align-self: flex-end;
  gap: 11px;
  margin-bottom: 18px;
  padding-right: 21px;
  border-bottom-right-radius: 0;
  background: #eeffde;
}

.bubble--out .bubble-text {
  margin-right: 12px;
}

.bubble--out .bubble-time {
  color: #6fb566;
}

/* Grouped messages sit closer and share flattened left corners */
.bubble--first {
  margin-bottom: 6px;
  padding-bottom: 17px;
  border-bottom-left-radius: 18px;
}

.bubble--last {
  padding-top: 25px;
  border-top-left-radius: 18px;
}

.bubble--first .bubble-text,
.bubble--last .bubble-text {
  margin-bottom: 4px;
}

.bubble--tail-in {
  border-bottom-left-radius: 0;
}

.bubble--tail-in::before,
.bubble--out::after {
  content: "";
  position: absolute;
  bottom: 0;
  width: 18px;
  height: 36px;
  background: inherit;
}

.bubble--tail-in::before {
  left: -17px;
  clip-path: path("M18 0 C17 18 12 29 1 33 Q-1 35 1 36 L18 36 Z");
}

.bubble--out::after {
  right: -17px;
  clip-path: path("M0 0 C1 18 6 29 17 33 Q19 35 17 36 L0 36 Z");
}

.bubble--long {
  display: grid;
  max-width: calc(100% - 119px);
}

.bubble--long > * {
  grid-area: 1 / 1;
}

.bubble--long .bubble-text {
  padding-right: 9px;
}

.bubble--long .bubble-time {
  align-self: end;
  justify-self: end;
}

.checks {
  margin-bottom: 7px;
  fill: none;
  stroke: #5cb152;
  stroke-width: 4px;
  stroke-linecap: round;
  stroke-linejoin: round;
}

/* Composer */
.composer {
  display: flex;
  align-items: center;
  height: 148px;
  padding: 3px 45px 0 46px;
  background: #fff;
}

.message-input {
  flex: 1;
  min-width: 0;
  height: 64px;
  margin: 0 32px 0 34px;
  padding: 0;
  border: 0;
  outline: 0;
  background: none;
  font: 700 54px/64px Roboto, "Liberation Sans", sans-serif;
}

.message-input::placeholder {
  color: #a3adb3;
  opacity: 1;
}

.tool--mic {
  margin-left: 86px;
}

.nav-bar {
  display: flex;
  align-items: center;
  justify-content: center;
  height: 45px;
  background: #efefef;
}

.nav-handle {
  width: 35%;
  height: 13px;
  border-radius: 7px;
  background: #a6a6a6;
}
```
